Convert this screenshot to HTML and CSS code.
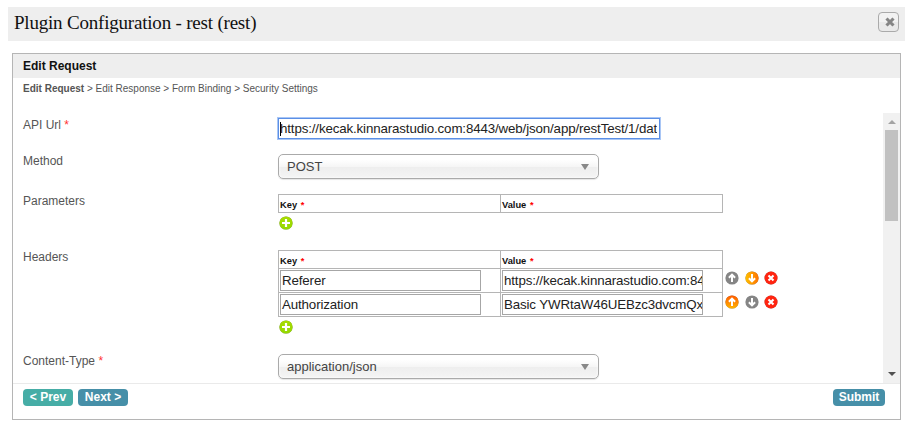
FILE: index.html
```html
<!DOCTYPE html>
<html lang="en">
<head>
<meta charset="utf-8">
<title>Plugin Configuration - rest (rest)</title>
<link rel="stylesheet" href="styles.css">
</head>
<body>
<svg class="defs" width="0" height="0">
  <defs>
    <linearGradient id="orange" x1="0" y1="0" x2="0" y2="1"><stop offset="0" stop-color="#ff5a00"/><stop offset="1" stop-color="#ffb400"/></linearGradient>
    <linearGradient id="orangeDown" x1="0" y1="0" x2="1" y2="0"><stop offset="0" stop-color="#ffc000"/><stop offset="1" stop-color="#ff7200"/></linearGradient>
    <linearGradient id="green" x1="0" y1="0" x2="0" y2="1"><stop offset="0" stop-color="#a9dc00"/><stop offset="1" stop-color="#93d800"/></linearGradient>
    <symbol id="up" viewBox="0 0 16 16"><circle cx="8" cy="8" r="6.6"/><path d="M8 12V5M4.9 7.7L8 4.6l3.1 3.1" fill="none" stroke="#fff" stroke-width="2"/></symbol>
    <symbol id="down" viewBox="0 0 16 16"><circle cx="8" cy="8" r="6.6"/><path d="M8 4v7M4.9 8.3L8 11.4l3.1-3.1" fill="none" stroke="#fff" stroke-width="2"/></symbol>
    <symbol id="del" viewBox="0 0 16 16"><circle cx="8" cy="8" r="6.5"/><path d="M5.5 5.5l5 5M10.5 5.5l-5 5" fill="none" stroke="#fff" stroke-width="2.1"/></symbol>
    <symbol id="add" viewBox="0 0 16 16"><circle cx="8" cy="8" r="6.6"/><path d="M8 4v8M4 8h8" fill="none" stroke="#fff" stroke-width="2.2"/></symbol>
  </defs>
</svg>
<header class="titlebar">
  <h1>Plugin Configuration - rest (rest)</h1>
  <button class="close" aria-label="Close"><svg width="10" height="10" viewBox="0 0 10 10"><path d="M1.5 1.5l7 7M8.5 1.5l-7 7" stroke="#858585" stroke-width="3.1"/></svg></button>
</header>
<main class="panel">
  <h2>Edit Request</h2>
  <nav class="crumbs"><b>Edit Request</b> &gt; Edit Response &gt; Form Binding &gt; Security Settings</nav>
  <div class="scroller">
    <div class="form">
      <div class="row url"><label>API Url <i>*</i></label>
        <div class="text focus"><span class="caret"></span><div class="value">https://kecak.kinnarastudio.com:8443/web/json/app/restTest/1/data</div></div></div>
      <div class="row method"><label>Method</label><div class="select">POST<span class="arrow"></span></div></div>
      <div class="row params"><label>Parameters</label>
        <div><div class="table"><div class="tr head"><div>Key <i>*</i></div><div>Value <i>*</i></div></div></div>
        <svg class="icon plus green"><use href="#add"/></svg></div></div>
      <div class="row headers"><label>Headers</label>
        <div>
          <div class="with-actions">
            <div class="table">
              <div class="tr head"><div>Key <i>*</i></div><div>Value <i>*</i></div></div>
              <div class="tr"><div><div class="text">Referer</div></div><div><div class="text">https://kecak.kinnarastudio.com:84</div></div></div>
              <div class="tr"><div><div class="text">Authorization</div></div><div><div class="text">Basic YWRtaW46UEBzc3dvcmQx</div></div></div>
            </div>
            <div class="actions">
              <div><svg class="icon gray"><use href="#up"/></svg><svg class="icon orange-down"><use href="#down"/></svg><svg class="icon red"><use href="#del"/></svg></div>
              <div><svg class="icon orange"><use href="#up"/></svg><svg class="icon gray"><use href="#down"/></svg><svg class="icon red"><use href="#del"/></svg></div>
            </div>
          </div>
          <svg class="icon plus green"><use href="#add"/></svg>
        </div></div>
      <div class="row"><label>Content-Type <i>*</i></label><div class="select">application/json<span class="arrow"></span></div></div>
    </div>
    <div class="scrollbar"><span class="sb-up"></span><span class="thumb"></span><span class="sb-down"></span></div>
  </div>
  <footer><button class="btn prev">&lt; Prev</button><button class="btn">Next &gt;</button><button class="btn submit">Submit</button></footer>
</main>
</body>
</html>
```
FILE: styles.css
```css
* { box-sizing: border-box; }
body { margin: 0; padding: 7px 8px 0; height: 426px; overflow: hidden; background: #fff; font-family: "Liberation Sans", Arial, sans-serif; color: #555; }
.defs { position: absolute; }
i { color: #f33; font-style: normal; }
button { font-family: inherit; border: 0; padding: 0; }
.titlebar { display: flex; justify-content: space-between; height: 34px; background: #eee; padding: 5px 6px 0; }
h1 { margin: 0; font: 400 19px/21px Georgia, "Liberation Serif", serif; letter-spacing: -.2px; color: #111; white-space: nowrap; }
.close { width: 21px; height: 20px; border: 1px solid #aaa; border-radius: 4px; background: linear-gradient(#f2f2f2 50%, #e9e9e9 50%); display: flex; align-items: center; justify-content: center; }
.close svg { margin: 0 0 0 2px; }
.panel { margin: 12px 4px 0; height: 367px; border: 1px solid #b5b5b5; }
h2 { margin: 0; height: 24px; padding-left: 10px; background: #eee; font-size: 12px; line-height: 24px; color: #111; }
.crumbs { height: 35px; padding: 3px 10px; font-size: 10px; line-height: 15px; white-space: nowrap; }
.scroller { display: flex; height: 271px; overflow: hidden; border-bottom: 1px solid #eaeaea; }
.form { flex: 1; padding: 5px 0 0 10px; }
.row { display: grid; grid-template-columns: 255px 1fr; }
.row label { font-size: 12px; line-height: 14px; }
.row label i { font-size: 12px; }
.url { height: 36px; }
.method { height: 40px; }
.params { height: 56px; }
.headers { height: 104px; }
.text { width: 201px; height: 21px; padding: 0 1px; border: 1px solid #a6a6a6; background: #fff; color: #222; font-size: 13.33px; letter-spacing: -.14px; line-height: 19px; white-space: nowrap; overflow: hidden; }
.text.focus { width: 382px; height: 21px; border: 1px solid #5b8fe6; box-shadow: 0 0 0 1px #a9c6f5; padding: 0 2px 0 1px; position: relative; }
.value { overflow: hidden; }
.caret { position: absolute; left: 1px; top: 3px; width: 1px; height: 14px; background: #000; }
.select { width: 321px; height: 25px; border: 1px solid #aaa; border-radius: 5px; padding: 0 9px 0 8px; display: flex; align-items: center; justify-content: space-between; font-size: 13px; color: #444; background: linear-gradient(#fff 20%, #f6f6f6 50%, #eee 52%, #f4f4f4 100%); box-shadow: 0 0 3px #fff inset, 0 1px 1px rgba(0,0,0,.1); }
.arrow { border: 4px solid transparent; border-top: 6px solid #888; border-bottom: 0; }
.table { width: 445px; border: 1px solid #b5b5b5; border-top: 0; }
.tr { display: grid; grid-template-columns: 221px 1fr; height: 24px; border-top: 1px solid #b5b5b5; }
.tr > div { padding: 1px; }
.tr > div + div { border-left: 1px solid #b5b5b5; }
.tr.head { height: 18px; font-size: 9.3px; font-weight: 700; line-height: 18px; color: #111; }
.tr.head > div { height: 17px; }
.tr.head i { margin-left: 1px; color: #f00; }
.icon { display: block; width: 16px; height: 16px; }
.plus { margin-top: 2px; }
.with-actions { display: flex; height: 67px; }
.actions { padding: 19.5px 0 0 1px; }
.actions > div { display: grid; grid-template-columns: 20px 19px 16px; height: 24px; }
.gray { fill: #858585; }
.red { fill: #ff2410; }
.orange { fill: url(#orange); }
.orange-down { fill: url(#orangeDown); }
.green { fill: url(#green); filter: drop-shadow(0 0 .7px #888); }
.red, .orange, .orange-down { filter: drop-shadow(0 0 .5px #888); }
.scrollbar { width: 17px; background: #f1f1f1; display: flex; flex-direction: column; align-items: center; }
.sb-up { border: 4px solid transparent; border-bottom-color: #a3a3a3; border-top: 0; margin-top: 7px; }
.thumb { width: 13px; height: 91px; margin-top: 6px; background: #c1c1c1; }
.sb-down { border: 4px solid transparent; border-top-color: #505050; border-bottom: 0; margin: auto 0 7px; }
footer { display: flex; padding: 5px 15px 0 10px; }
.btn { width: 50px; height: 17px; margin-right: 5px; border-radius: 4px; background: #468fa8; color: #fff; font-size: 12px; font-weight: 700; line-height: 17px; }
.prev { background: #46ada6; }
.submit { width: 52px; margin: 0 0 0 auto; }
```
